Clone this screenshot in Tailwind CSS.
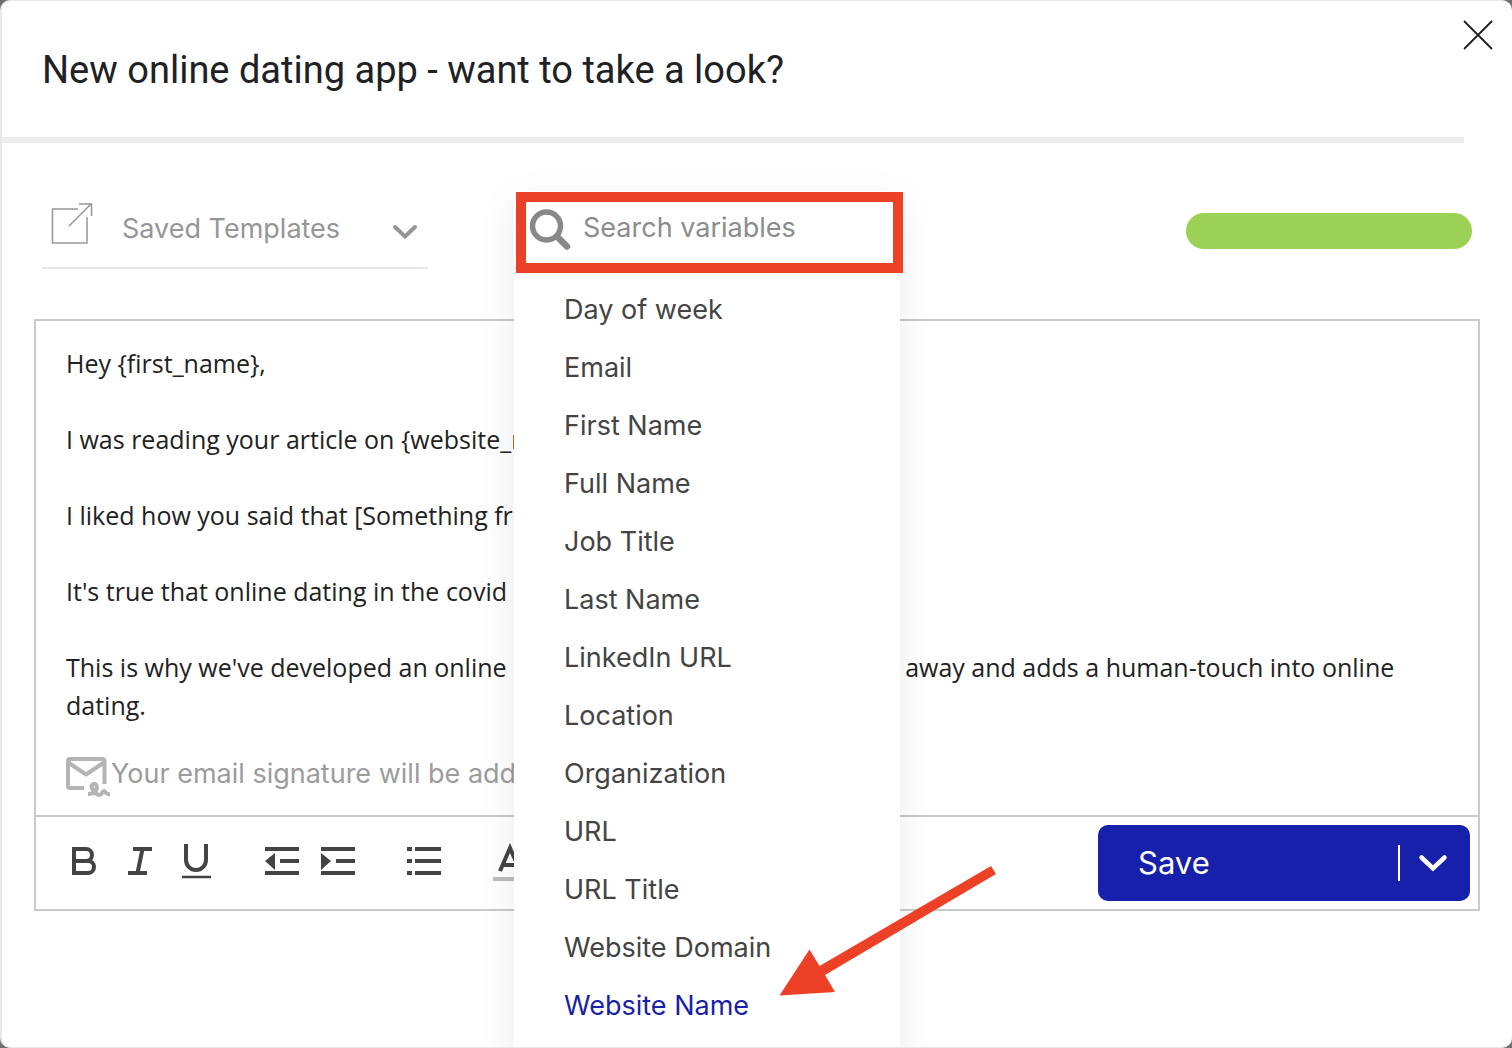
<!DOCTYPE html>
<html lang="en">
<head>
<meta charset="utf-8">
<meta name="viewport" content="width=device-width, initial-scale=1">
<title>Edit email template</title>
<script src="https://cdn.jsdelivr.net/npm/@tailwindcss/browser@4"></script>
</head>
<body class="bg-[#6f6f6f] font-['Inter',sans-serif]">
<main class="relative flex min-h-screen flex-col overflow-hidden rounded-[10px] border-y border-l-2 border-[#e5e9ed] bg-white">
  <header class="mr-12 flex h-[142px] flex-col justify-between border-b-6 border-[#ededed] pl-10">
    <h1 class="mt-[46px] font-['Roboto',sans-serif] text-[38px] leading-[46px] text-[#202124]">New online dating app - want to take a look?</h1>
  </header>
  <button type="button" aria-label="Close" class="absolute top-[19px] right-[19px] text-[#1f1f1f]">
    <svg class="size-[30px]" viewBox="0 0 30 30" fill="none" stroke="currentColor" stroke-width="1.8"><path d="M1 1 29 29M29 1 1 29"/></svg>
  </button>

  <section class="flex items-start px-10 pt-12">
    <div class="relative flex h-[78px] w-[386px] items-center border-b-2 border-[#e5e9ed] text-[#969696]">
      <svg class="pointer-events-none absolute top-[9px] left-[9px] size-[44px]" viewBox="0 0 44 44" fill="none" stroke="currentColor" stroke-width="1.5"><path d="M27 9H1.5V43H36V17M18 26 40 4M28 4H40.500V16"/></svg>
      <select aria-label="Saved Templates" class="h-[74px] w-full appearance-none bg-transparent pl-20 text-[27px] outline-none">
        <option>Saved Templates</option>
      </select>
      <svg class="pointer-events-none absolute top-[33px] right-[10px] h-[16px] w-[26px]" viewBox="0 0 26 16" fill="none" stroke="currentColor" stroke-width="4" stroke-linecap="round"><path d="M3 3 13 12.500 23 3"/></svg>
    </div>

    <div class="relative z-10 ml-[86px] h-[78px] w-[386px]">
      <div class="absolute inset-x-0 top-0 h-[900px] bg-white shadow-[0_10px_36px_rgba(0,0,0,0.08)]">
        <div class="flex h-[78px] items-center gap-3 border-b-2 border-[#e5e9ed] pb-1 pl-[15px]">
          <svg class="mt-1 size-[42px] shrink-0 text-[#888]" viewBox="0 0 42 42" fill="none" stroke="currentColor"><circle cx="17.500" cy="18" r="14" stroke-width="5.500"/><path d="M28 28.500 38 38.500" stroke-width="6.500" stroke-linecap="round"/></svg>
          <input type="search" aria-label="Search variables" placeholder="Search variables" class="h-full w-[300px] bg-transparent text-[27px] text-[#444] outline-none placeholder:text-[#8c8c8c]">
        </div>
        <ul class="mt-3 text-[27px] leading-[58px] text-[#444]">
          <li><button type="button" class="w-full pl-[50px] text-left">Day of week</button></li>
          <li><button type="button" class="w-full pl-[50px] text-left">Email</button></li>
          <li><button type="button" class="w-full pl-[50px] text-left">First Name</button></li>
          <li><button type="button" class="w-full pl-[50px] text-left">Full Name</button></li>
          <li><button type="button" class="w-full pl-[50px] text-left">Job Title</button></li>
          <li><button type="button" class="w-full pl-[50px] text-left">Last Name</button></li>
          <li><button type="button" class="w-full pl-[50px] text-left">LinkedIn URL</button></li>
          <li><button type="button" class="w-full pl-[50px] text-left">Location</button></li>
          <li><button type="button" class="w-full pl-[50px] text-left">Organization</button></li>
          <li><button type="button" class="w-full pl-[50px] text-left">URL</button></li>
          <li><button type="button" class="w-full pl-[50px] text-left">URL Title</button></li>
          <li><button type="button" class="w-full pl-[50px] text-left">Website Domain</button></li>
          <li><button type="button" class="w-full pl-[50px] text-left text-[#1a1fa8]">Website Name</button></li>
        </ul>
        <!-- Callouts: search box frame and arrow to the chosen variable -->
        <div class="pointer-events-none absolute top-px -right-[3px] left-[2px] h-[81px] border-10 border-[#ec4027]"></div>
        <svg class="pointer-events-none absolute top-[675px] left-[264px] h-[134px] w-[220px]" viewBox="0 0 220 134" fill="#ec4027"><path d="M213 0 218 8 47 109 57 126 1.500 129.500 31.500 83.500 41.500 100Z"/></svg>
      </div>
    </div>

    <div role="status" aria-label="Template score" class="mt-[22px] ml-auto h-9 w-[286px] rounded-full bg-[#9bd155]"></div>
  </section>

  <section class="mt-[50px] mr-8 ml-8 border-2 border-[#cacaca]">
    <div role="textbox" aria-label="Message" aria-multiline="true" contenteditable="true" class="px-[30px] pt-[23px] font-['Open_Sans',sans-serif] text-[25px] leading-[38px] text-[#222] outline-none">
      <p>Hey {first_name},</p>
      <p><br></p>
      <p>I was reading your article on {website_name}.</p>
      <p><br></p>
      <p>I liked how you said that [Something from article].</p>
      <p><br></p>
      <p>It's true that online dating in the covid era is hard.</p>
      <p><br></p>
      <p>This is why we've developed an online dating app that takes the swiping away and adds a human-touch into online dating.</p>
    </div>
    <div class="mt-[31px] mb-4 flex h-11 items-center pl-[30px] text-[27px] text-[#9c9c9c]">
      <svg class="h-[42px] w-[45px] shrink-0 text-[#b4b4b4]" viewBox="0 0 45 42" fill="none" stroke="currentColor" stroke-width="4" stroke-linejoin="round"><path d="M18 32H4Q2 32 2 30V5Q2 3 4 3H36Q38.500 3 38.500 5V28M3 7 20 18.500 37 7"/><path d="M22 38C29 38 32 33 30.500 29.500 29 26 24.500 28 26 32 28 37 31 39 34 39 36 39 36 35 38 35 40 35 39 39 44 38" stroke-width="4"/></svg>
      <p class="pb-[6px]">Your email signature will be added</p>
    </div>
    <div class="flex h-[94px] items-center justify-between border-t-2 border-[#cacaca] pr-2 pl-[30px] text-[#444]">
      <div class="flex gap-[50px]">
        <div class="flex gap-5">
          <button type="button" aria-label="Bold"><svg class="h-10 w-9" viewBox="0 0 36 40" fill="none" stroke="currentColor" stroke-width="4"><path d="M8 18H20A6 6 0 0 0 20 6H8V30H22A6 6 0 0 0 22 18H18"/></svg></button>
          <button type="button" aria-label="Italic"><svg class="h-10 w-9" viewBox="0 0 36 40" fill="none" stroke="currentColor" stroke-width="4"><path d="M11 6H30M6 30H25M20.500 6 15.500 30"/></svg></button>
          <button type="button" aria-label="Underline"><svg class="h-10 w-9" viewBox="0 0 36 40" fill="none" stroke="currentColor" stroke-width="4"><path d="M8 1V17A10 10 0 0 0 28 17V1"/><path d="M4 34H33" stroke-width="2.500"/></svg></button>
        </div>
        <div class="flex gap-5">
          <button type="button" aria-label="Decrease indent"><svg class="h-10 w-9" viewBox="0 0 36 40" fill="none" stroke="currentColor" stroke-width="4"><path d="M1 6H35M16 18H35M1 30H35"/><path d="M11 10V27L1 18Z" fill="currentColor" stroke="none"/></svg></button>
          <button type="button" aria-label="Increase indent"><svg class="h-10 w-9" viewBox="0 0 36 40" fill="none" stroke="currentColor" stroke-width="4"><path d="M1 6H35M16 18H35M1 30H35"/><path d="M1 10V27L11 18Z" fill="currentColor" stroke="none"/></svg></button>
        </div>
        <button type="button" aria-label="Bulleted list"><svg class="h-10 w-9" viewBox="0 0 36 40" fill="none" stroke="currentColor" stroke-width="4"><path d="M1 6H6M9 6H35M1 18H6M9 18H35M1 30H6M9 30H35"/></svg></button>
        <button type="button" aria-label="Text color"><svg class="h-10 w-9" viewBox="0 0 36 40" fill="none" stroke="currentColor" stroke-width="4"><path d="M8 28 18 5 28 28M12 22H24"/><path d="M1 36H35" stroke="#bdbdbd"/></svg></button>
      </div>
      <div class="flex h-[76px] w-[372px] items-center rounded-[10px] bg-[#1720ab] text-white">
        <button type="button" class="h-full flex-1 pl-10 text-left text-[31px]">Save</button>
        <button type="button" aria-label="More save options" class="flex h-9 w-[72px] items-center justify-center border-l-2 border-white pr-1">
          <svg class="h-[18px] w-[30px]" viewBox="0 0 30 18" fill="none" stroke="currentColor" stroke-width="4.500" stroke-linecap="round"><path d="M3.500 3.500 15 14.500 26.500 3.500"/></svg>
        </button>
      </div>
    </div>
  </section>
</main>
</body>
</html>
